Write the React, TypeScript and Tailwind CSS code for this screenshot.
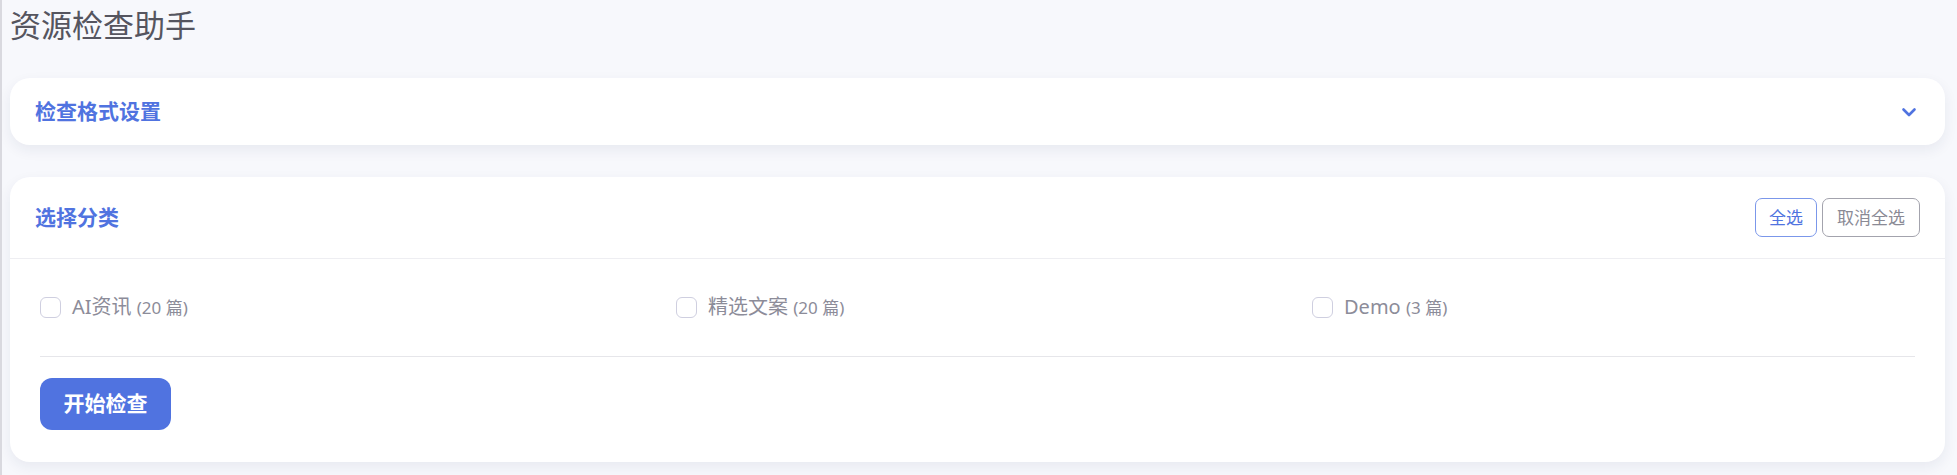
import React from "react";

const font = '"Noto Sans", "Noto Sans CJK SC", sans-serif';

function Check({ label, count }: { label: string; count: string }) {
  return (
    <label className="flex items-center gap-[11px] h-[30px]">
      <span className="w-[21px] h-[21px] rounded-[6px] border-[1.5px] border-[#cfcfe0] bg-white shrink-0" />
      <span className="text-[20px] text-[#8c8c99] leading-none">
        {label} <span className="text-[17px] text-[#8c8c99]">{count}</span>
      </span>
    </label>
  );
}

export default function App() {
  return (
    <div
      className="w-[1957px] h-[475px] bg-[#f7f8fc] border-l-2 border-[#d9d9df] pl-2 pr-[12px] overflow-hidden"
      style={{ fontFamily: font }}
    >
      <h1 className="text-[31px] leading-[36px] text-[#55555f] font-normal pt-[7px]">资源检查助手</h1>

      <div className="mt-[35px] bg-white rounded-[20px] shadow-[0_5px_14px_rgba(30,40,90,0.07)] h-[67px] px-[25px] flex items-center justify-between">
        <div className="text-[21px] font-bold text-[#5073e0]">检查格式设置</div>
        <svg width="22" height="22" viewBox="0 0 22 22" fill="none">
          <path d="M5.5 8.5 L11 14 L16.5 8.5" stroke="#5073e0" strokeWidth="2.6" strokeLinecap="round" strokeLinejoin="round" />
        </svg>
      </div>

      <div className="mt-[32px] bg-white rounded-[20px] shadow-[0_5px_14px_rgba(30,40,90,0.07)]">
        <div className="h-[82px] px-[25px] flex items-center justify-between border-b border-[#eeeef2]">
          <div className="text-[21px] font-bold text-[#5073e0]">选择分类</div>
          <div className="flex gap-[5px]">
            <button className="h-[39px] px-[13px] rounded-[7px] border border-[#7b97ea] text-[17px] text-[#5073e0] bg-white">
              全选
            </button>
            <button className="h-[39px] px-[14px] rounded-[7px] border border-[#a3a3ad] text-[17px] text-[#8a8a95] bg-white">
              取消全选
            </button>
          </div>
        </div>
        <div className="px-[30px] pt-[33px] pb-[32px]">
          <div className="grid grid-cols-3 gap-x-[33px]">
            <Check label="AI资讯" count="(20 篇)" />
            <Check label="精选文案" count="(20 篇)" />
            <Check label="Demo" count="(3 篇)" />
          </div>
          <div className="mt-[34px] border-t border-[#e6e6ea]" />
          <button className="mt-[21px] h-[52px] w-[131px] rounded-[12px] bg-[#5073e0] text-white text-[21px] font-bold">
            开始检查
          </button>
        </div>
      </div>
    </div>
  );
}
